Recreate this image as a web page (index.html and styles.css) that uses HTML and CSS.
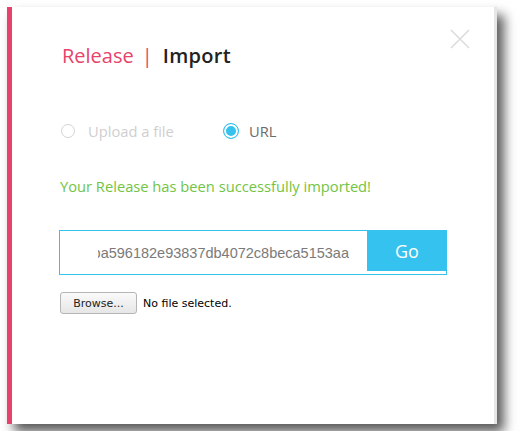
FILE: index.html
```html
<!DOCTYPE html>
<html>
<head>
<meta charset="utf-8">
<link rel="stylesheet" href="styles.css">
</head>
<body>
<div class="modal">
  <button class="close" aria-label="Close">
    <svg width="20" height="20" viewBox="0 0 20 20"><path d="M1 1L19 19M19 1L1 19" stroke="#dcdcdc" stroke-width="1.6" fill="none"/></svg>
  </button>
  <h1 class="title"><span class="t-release">Release</span><span class="t-sep">|</span><span class="t-import">Import</span></h1>
  <div class="radios">
    <label class="radio disabled"><span class="dot"></span>Upload a file</label>
    <label class="radio checked"><span class="dot"></span>URL</label>
  </div>
  <p class="success">Your Release has been successfully imported!</p>
  <div class="urlbox">
    <div class="urlfield"><div class="urltext"><span>ba596182e93837db4072c8beca5153aa</span></div></div>
    <button class="go">Go</button>
  </div>
  <div class="filerow">
    <button class="browse">Browse...</button>
    <span class="nofile">No file selected.</span>
  </div>
</div>
</body>
</html>
```
FILE: styles.css
```css
html, body { margin: 0; padding: 0; background: #fff; }
body { padding: 7px; font-family: "Open Sans", sans-serif; }
.modal {
  position: relative;
  box-sizing: border-box;
  width: 490px;
  height: 417px;
  background: #fff;
  border-left: 5px solid #e8416a;
  border-right: 3px solid #e6e6e6;
  box-shadow: 7px 8px 11px rgba(0,0,0,0.65);
  padding: 35px 0 0 50px;
}
.close {
  position: absolute;
  top: 22px; right: 24px;
  border: 0; background: none; padding: 0; width: 20px; height: 20px;
}
.close svg { display: block; }
.title { margin: 0; font-size: 20px; font-weight: 400; line-height: 28px; display: flex; align-items: center; }
.t-release { color: #e8436b; }
.t-sep { color: #e8436b; margin: 0 10px 0 8px; font-size: 20px; }
.t-import { color: #222; font-weight: 600; letter-spacing: 0.3px; }
.radios { display: flex; margin-top: 49px; height: 24px; align-items: center; }
.radio { display: flex; align-items: center; font-size: 14.7px; }
.radio .dot { width: 14px; height: 14px; box-sizing: border-box; border-radius: 50%; margin-right: 12px; }
.radio.disabled { color: #cfcfcf; width: 161px; }
.radio.disabled .dot { border: 1px solid #d4d4d4; margin-left: -1px; margin-right: 13px; }
.radio.checked { color: #6b6b6b; }
.radio.checked .dot { width: 16px; height: 16px; border: 1.5px solid #35c2ef; background: #35c2ef; box-shadow: inset 0 0 0 2px #fff; margin-right: 10px; }
.success { margin: 33px 0 0 -2px; color: #72c444; font-size: 14.7px; line-height: 20px; }
.urlbox {
  display: flex;
  align-items: flex-start;
  margin: 34px 0 0 -3px;
  width: 388px;
  height: 45px;
  box-sizing: border-box;
  border: 1px solid #35c2ef;
  border-top: 0;
}
.urlfield {
  flex: 1;
  min-width: 0;
  height: 44px;
  box-sizing: border-box;
  display: flex;
  align-items: center;
  border-top: 1px solid #35c2ef;
  padding: 0 18px 0 38px;
}
.urltext {
  flex: 1;
  min-width: 0;
  display: flex;
  justify-content: flex-end;
  overflow: hidden;
  white-space: nowrap;
  font-family: "Liberation Sans", Arial, sans-serif;
  font-size: 14.5px;
  color: #7a7a7a;
}
.go {
  width: 80px;
  height: 41px;
  margin-right: -1px;
  border: 0;
  background: #35c2ef;
  color: #fff;
  font-family: "Open Sans", sans-serif;
  font-size: 18px;
  padding: 0;
}
.filerow { display: flex; align-items: center; margin-top: 17px; margin-left: -2px; }
.browse {
  font-family: "DejaVu Sans", sans-serif;
  font-size: 11px;
  height: 22px;
  width: 77px;
  padding: 0;
  border: 1px solid #b5b5b5;
  border-radius: 3px;
  background: linear-gradient(#fafafa, #e6e6e6);
  color: #222;
}
.nofile { font-family: "DejaVu Sans", sans-serif; font-size: 11px; margin-left: 6px; color: #000; }
```
